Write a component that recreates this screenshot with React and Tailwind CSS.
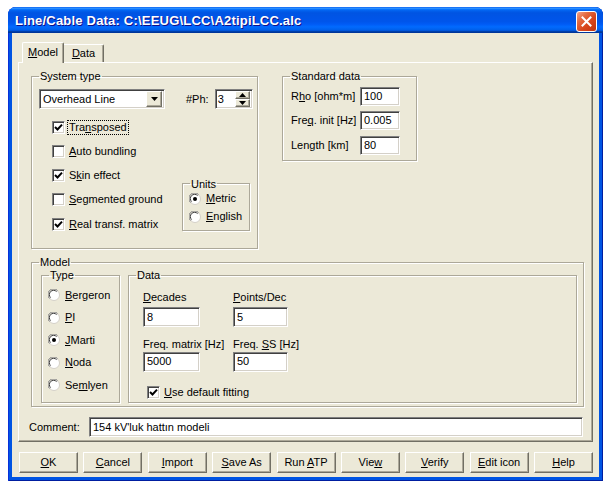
import React from "react";

const U = ({ children }) => <span className="underline underline-offset-[1px]">{children}</span>;

function Group({ label, className, children }) {
  return (
    <fieldset className={"m-0 p-0 min-w-0 border border-[#aca899] shadow-[1px_1px_0_#fff,inset_1px_1px_0_#fff] " + className}>
      <legend className="ml-[7px] px-[1px] h-[12px] leading-[12px]">{label}</legend>
      {children}
    </fieldset>
  );
}

function TextBox({ className, value }) {
  return (
    <div className={"bg-white border border-t-[#808080] border-l-[#808080] border-r-white border-b-white shadow-[inset_1px_1px_0_#404040,inset_-1px_-1px_0_#d4d0c8] flex items-center pl-[3px] whitespace-nowrap " + className}>
      <span>{value}</span>
    </div>
  );
}

function Check({ checked, children, focus, className }) {
  return (
    <div className={"flex items-center " + (className || "")}>
      <div className="w-[13px] h-[13px] bg-white border border-t-[#808080] border-l-[#808080] border-r-white border-b-white shadow-[inset_1px_1px_0_#404040,inset_-1px_-1px_0_#d4d0c8] flex items-center justify-center">
        {checked && (
          <svg width="9" height="9" viewBox="0 0 9 9">
            <path d="M1 4 L3.5 6.5 L8 1.6" fill="none" stroke="#000" strokeWidth="2" />
          </svg>
        )}
      </div>
      <span className={"ml-[3px] px-[1px] whitespace-nowrap " + (focus ? "outline outline-1 outline-dotted outline-black" : "")}>{children}</span>
    </div>
  );
}

function Radio({ checked, children, className }) {
  return (
    <div className={"flex items-center " + (className || "")}>
      <svg width="12" height="12" viewBox="0 0 12 12">
        <circle cx="6" cy="6" r="5.5" fill="#fff" stroke="#d4d0c8" />
        <path d="M1.5 9.5 A5 5 0 0 1 9.5 1.5" fill="none" stroke="#808080" strokeWidth="1" />
        <path d="M2.6 8.6 A3.9 3.9 0 0 1 8.6 2.6" fill="none" stroke="#404040" strokeWidth="1" />
        {checked && <circle cx="6" cy="6" r="2" fill="#000" />}
      </svg>
      <span className="ml-[5px] whitespace-nowrap">{children}</span>
    </div>
  );
}

const raised =
  "bg-[#ece9d8] border border-t-white border-l-white border-r-[#716f64] border-b-[#716f64] shadow-[inset_-1px_-1px_0_#aca899]";

function Btn({ children }) {
  return (
    <div className={"w-[59px] h-[21px] flex items-center justify-center whitespace-nowrap " + raised}>
      <span>{children}</span>
    </div>
  );
}

export default function App() {
  return (
    <div className="w-[608px] h-[484px] bg-white pt-[7px] pl-[8px] text-[11px] leading-[13px] text-black font-['Liberation_Sans',Arial,sans-serif]">
      <div className="w-[595px] h-[474px] rounded-t-[8px] bg-[#0054e3] flex flex-col overflow-hidden shadow-[inset_1px_0_0_#0831d9,inset_-1px_0_0_#001ea0,inset_0_-1px_0_#001ea0]">
        {/* Title bar */}
        <div className="h-[26px] flex items-center pl-[7px] pr-[6px] bg-[linear-gradient(to_bottom,#0058ee_0%,#3593ff_4%,#288eff_6%,#127dff_8%,#036ffc_10%,#0262ee_14%,#0057e5_20%,#0054e3_24%,#0055eb_56%,#005bf5_66%,#026afe_76%,#0062ef_86%,#0052d6_92%,#0040ab_94%,#003092_100%)]">
          <span className="text-white font-bold text-[13px] tracking-[0.2px] [text-shadow:1px_1px_0_#0f1089]">
            Line/Cable Data: C:\EEUG\LCC\A2tipiLCC.alc
          </span>
          <div className="ml-auto mt-[2px] w-[21px] h-[21px] rounded-[3px] border border-white bg-[linear-gradient(135deg,#f4a58c_0%,#e36a40_30%,#d9471d_60%,#c0330f_100%)] flex items-center justify-center">
            <svg width="13" height="13" viewBox="0 0 13 13">
              <path d="M2.5 2.5 L10.5 10.5 M10.5 2.5 L2.5 10.5" stroke="#fff" strokeWidth="2" strokeLinecap="square" />
            </svg>
          </div>
        </div>

        {/* Body */}
        <div className="flex-1 mx-[4px] mb-[4px] bg-[#ece9d8] flex flex-col pt-[9px] px-[6px]">
          {/* Tabs */}
          <div className="flex items-end h-[20px] pl-[4px]">
            <div className="relative z-10 -mb-[1px] h-[21px] w-[42px] bg-[#ece9d8] border-t border-l border-white border-r border-r-[#716f64] rounded-t-[2px] flex items-start justify-center pt-[3px] shadow-[inset_-1px_0_0_#aca899]">
              <span><U>M</U>odel</span>
            </div>
            <div className="h-[18px] w-[40px] bg-[#ece9d8] border-t border-white border-r border-r-[#716f64] rounded-tr-[2px] flex items-start justify-center pt-[2px] shadow-[inset_-1px_0_0_#aca899]">
              <span><U>D</U>ata</span>
            </div>
          </div>

          {/* Panel */}
          <div className="h-[380px] border border-t-white border-l-white border-r-[#716f64] border-b-[#716f64] shadow-[inset_-1px_-1px_0_#aca899] pt-[7px] pl-[12px] flex flex-col">
            <div className="flex items-start">
              {/* System type */}
              <Group label="System type" className="w-[227px] h-[179px]">
                <div className="flex items-center mt-[7px] pl-[7px]">
                  <div className="w-[126px] h-[20px] bg-white border border-t-[#808080] border-l-[#808080] border-r-white border-b-white shadow-[inset_1px_1px_0_#404040,inset_-1px_-1px_0_#d4d0c8] flex items-center pl-[3px] pr-[2px]">
                    <span>Overhead Line</span>
                    <div className={"ml-auto w-[16px] h-[16px] flex items-center justify-center " + raised}>
                      <svg width="7" height="4" viewBox="0 0 7 4"><path d="M0 0 H7 L3.5 4 Z" fill="#000" /></svg>
                    </div>
                  </div>
                  <span className="ml-[21px]">#Ph:</span>
                  <div className="ml-[6px] w-[38px] h-[20px] bg-white border border-t-[#808080] border-l-[#808080] border-r-white border-b-white shadow-[inset_1px_1px_0_#404040,inset_-1px_-1px_0_#d4d0c8] flex items-center pl-[2px] pr-[2px]">
                    <span>3</span>
                    <div className="ml-auto w-[15px] h-[16px] flex flex-col">
                      <div className={"h-[8px] flex items-center justify-center " + raised}>
                        <svg width="7" height="4" viewBox="0 0 7 4"><path d="M0 4 H7 L3.5 0 Z" fill="#000" /></svg>
                      </div>
                      <div className={"h-[8px] flex items-center justify-center " + raised}>
                        <svg width="7" height="4" viewBox="0 0 7 4"><path d="M0 0 H7 L3.5 4 Z" fill="#000" /></svg>
                      </div>
                    </div>
                  </div>
                </div>
                <div className="flex pl-[20px] mt-[6px]">
                  <div className="w-[130px] flex flex-col">
                    <Check className="h-[24.25px]" checked focus>Tra<U>n</U>sposed</Check>
                    <Check className="h-[24.25px]"><U>A</U>uto bundling</Check>
                    <Check className="h-[24.25px]" checked>S<U>k</U>in effect</Check>
                    <Check className="h-[24.25px]"><U>S</U>egmented ground</Check>
                    <Check className="h-[24.25px]" checked><U>R</U>eal transf. matrix</Check>
                  </div>
                  <Group label="Units" className="w-[68px] h-[53px] mt-[62.5px]">
                    <div className="pl-[6px]">
                      <Radio className="h-[18px]" checked><U>M</U>etric</Radio>
                      <Radio className="h-[18px]"><U>E</U>nglish</Radio>
                    </div>
                  </Group>
                </div>
              </Group>

              {/* Standard data */}
              <Group label="Standard data" className="ml-[24px] w-[135px] h-[91px]">
                <div className="mt-[2px] pl-[8px]">
                  <div className="flex items-center h-[24.5px]">
                    <span className="w-[69px] whitespace-nowrap">R<U>h</U>o [ohm*m]</span>
                    <TextBox className="w-[40px] h-[19px]" value="100" />
                  </div>
                  <div className="flex items-center h-[24.5px]">
                    <span className="w-[69px] whitespace-nowrap">Fre<U>q</U>. init [Hz]</span>
                    <TextBox className="w-[40px] h-[19px]" value="0.005" />
                  </div>
                  <div className="flex items-center h-[24.5px]">
                    <span className="w-[69px] whitespace-nowrap">Length [km]</span>
                    <TextBox className="w-[40px] h-[19px]" value="80" />
                  </div>
                </div>
              </Group>
            </div>

            {/* Model */}
            <Group label="Model" className="mt-[7px] w-[553px] h-[151px]">
              <div className="flex mt-[1px] pl-[9px]">
                <Group label="Type" className="w-[79px] h-[134px]">
                  <div className="mt-[3px] pl-[6px]">
                    <Radio className="h-[22.5px]"><U>B</U>ergeron</Radio>
                    <Radio className="h-[22.5px]"><U>P</U>I</Radio>
                    <Radio className="h-[22.5px]" checked><U>J</U>Marti</Radio>
                    <Radio className="h-[22.5px]"><U>N</U>oda</Radio>
                    <Radio className="h-[22.5px]">Se<U>m</U>lyen</Radio>
                  </div>
                </Group>
                <Group label="Data" className="ml-[8px] w-[449px] h-[134px]">
                  <div className="pl-[14px]">
                    <div className="grid grid-cols-[90px_110px]">
                      <div className="flex flex-col">
                        <span className="mt-[9px] h-[14px] leading-[14px] whitespace-nowrap"><U>D</U>ecades</span>
                        <TextBox className="mt-[3px] w-[57px] h-[20px]" value="8" />
                        <span className="mt-[9.5px] h-[14px] leading-[14px] whitespace-nowrap">Freq. matrix [Hz]</span>
                        <TextBox className="mt-[1px] w-[57px] h-[20px]" value="5000" />
                      </div>
                      <div className="flex flex-col">
                        <span className="mt-[9px] h-[14px] leading-[14px] whitespace-nowrap"><U>P</U>oints/Dec</span>
                        <TextBox className="mt-[3px] w-[55px] h-[20px]" value="5" />
                        <span className="mt-[9.5px] h-[14px] leading-[14px] whitespace-nowrap">Freq. <U>S</U>S [Hz]</span>
                        <TextBox className="mt-[1px] w-[55px] h-[20px]" value="50" />
                      </div>
                    </div>
                    <Check className="mt-[14px] pl-[4px] h-[13px]" checked><U>U</U>se default fitting</Check>
                  </div>
                </Group>
              </div>
            </Group>

            {/* Comment */}
            <div className="flex items-center mt-[10px] -ml-[2px] mr-[9px]">
              <span className="w-[60px] whitespace-nowrap">Comment:</span>
              <TextBox className="flex-1 h-[20px]" value="154 kV'luk hattın modeli" />
            </div>
          </div>

          {/* Buttons */}
          <div className="mt-[10px] ml-[1px] w-[574px] flex justify-between">
            <Btn><U>O</U>K</Btn>
            <Btn><U>C</U>ancel</Btn>
            <Btn><U>I</U>mport</Btn>
            <Btn><U>S</U>ave As</Btn>
            <Btn>Run <U>A</U>TP</Btn>
            <Btn>Vie<U>w</U></Btn>
            <Btn><U>V</U>erify</Btn>
            <Btn><U>E</U>dit icon</Btn>
            <Btn><U>H</U>elp</Btn>
          </div>
        </div>
      </div>
    </div>
  );
}
